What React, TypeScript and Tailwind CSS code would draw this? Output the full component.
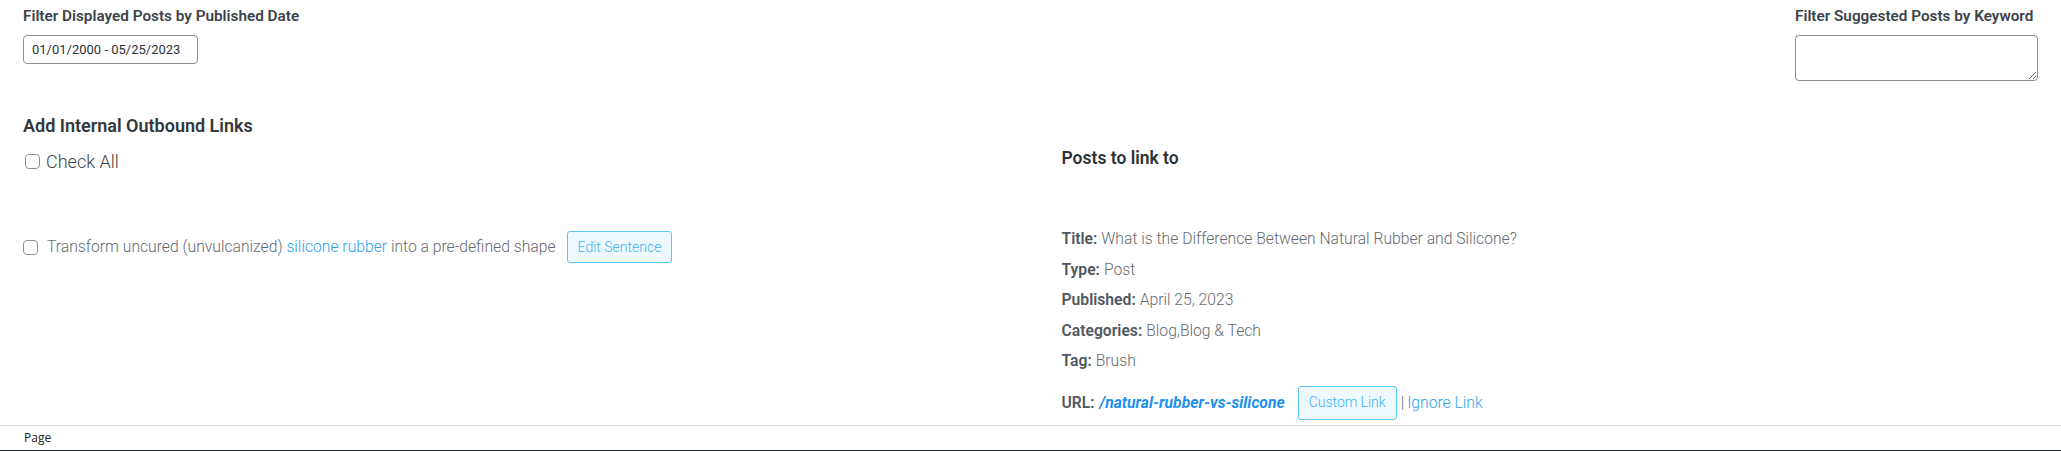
import React from 'react'

function Box({ className = '' }: { className?: string }) {
  return (
    <span
      className={`inline-block h-[15px] w-[15px] shrink-0 rounded-[4px] border border-[#8c8f94] bg-white ${className}`}
    />
  )
}

function Detail({ label, value }: { label: string; value: string }) {
  return (
    <div className="flex h-[30.5px] items-center">
      <span className="font-semibold text-[#50575e]">{label}:</span>
      <span className="ml-[4px] font-light text-[#646970]">{value}</span>
    </div>
  )
}

export default function App() {
  return (
    <div
      className="flex w-[2061px] flex-col bg-white text-[15.7px]"
      style={{ fontFamily: 'Roboto, "Liberation Sans", sans-serif' }}
    >
      <div className="flex items-start justify-between px-[23px] pt-[6px]">
        <div className="flex flex-col">
          <div className="h-[20px] text-[15.3px] leading-[20px] font-semibold text-[#3c434a]">
            Filter Displayed Posts by Published Date
          </div>
          <div className="mt-[9px] flex h-[29px] w-[175px] items-center rounded-[4px] border border-[#8c8f94] px-[8px] text-[13px] text-[#2c3338]">
            01/01/2000 - 05/25/2023
          </div>
        </div>
        <div className="flex w-[243px] flex-col">
          <div className="h-[20px] text-[15.3px] leading-[20px] font-semibold whitespace-nowrap text-[#3c434a]">
            Filter Suggested Posts by Keyword
          </div>
          <textarea className="mt-[9px] block h-[46px] w-[243px] rounded-[4px] border border-[#8c8f94] bg-white outline-none" />
        </div>
      </div>

      <div className="mt-[33px] px-[23px] text-[18px] leading-[24px] font-semibold text-[#32373c]">
        Add Internal Outbound Links
      </div>

      <div className="mt-[9px] grid grid-cols-2 gap-x-[62px] px-[23px]">
        <div className="flex flex-col">
          <div className="flex h-[28px] items-center gap-[6px] pl-[2px]">
            <Box />
            <span className="text-[18px] font-light text-[#3c434a]">Check All</span>
          </div>
          <div className="mt-[56px] flex h-[32px] items-center">
            <Box />
            <span className="ml-[9px] font-light text-[#646970]">
              Transform uncured (unvulcanized){' '}
              <span className="text-[#2a9ff0]">silicone rubber</span> into a pre-defined shape
            </span>
            <button className="ml-[11px] h-[32px] rounded-[3px] border border-[#5cc6f7] bg-[#eef9ff] px-[10px] text-[14px] font-light text-[#3cb4f2]">
              Edit Sentence
            </button>
          </div>
        </div>

        <div className="flex flex-col">
          <div className="h-[22px] text-[17.5px] leading-[22px] font-semibold text-[#2c3338]">
            Posts to link to
          </div>
          <div className="mt-[55px] flex flex-col">
            <Detail label="Title" value="What is the Difference Between Natural Rubber and Silicone?" />
            <Detail label="Type" value="Post" />
            <Detail label="Published" value="April 25, 2023" />
            <Detail label="Categories" value="Blog,Blog & Tech" />
            <Detail label="Tag" value="Brush" />
            <div className="mt-[9px] flex h-[34px] items-center">
              <span className="font-semibold text-[#50575e]">URL:</span>
              <span className="ml-[5px] font-bold text-[#1e8ff0] italic">/natural-rubber-vs-silicone</span>
              <button className="ml-[13px] h-[34px] rounded-[3px] border border-[#5cc6f7] bg-[#eef9ff] px-[10px] text-[14px] font-light text-[#3cb4f2]">
                Custom Link
              </button>
              <span className="ml-[4px] font-light text-[#646970]">|</span>
              <span className="ml-[3px] font-light text-[#2ea2ef]">Ignore Link</span>
            </div>
          </div>
        </div>
      </div>

      <div
        className="mt-[5.5px] flex h-[26px] items-center border-t border-b border-t-[#dcdcde] border-b-[#1d2327] px-[24px] text-[12px] text-[#1d2327]"
        style={{ fontFamily: '"Open Sans", sans-serif' }}
      >
        Page
      </div>
    </div>
  )
}
